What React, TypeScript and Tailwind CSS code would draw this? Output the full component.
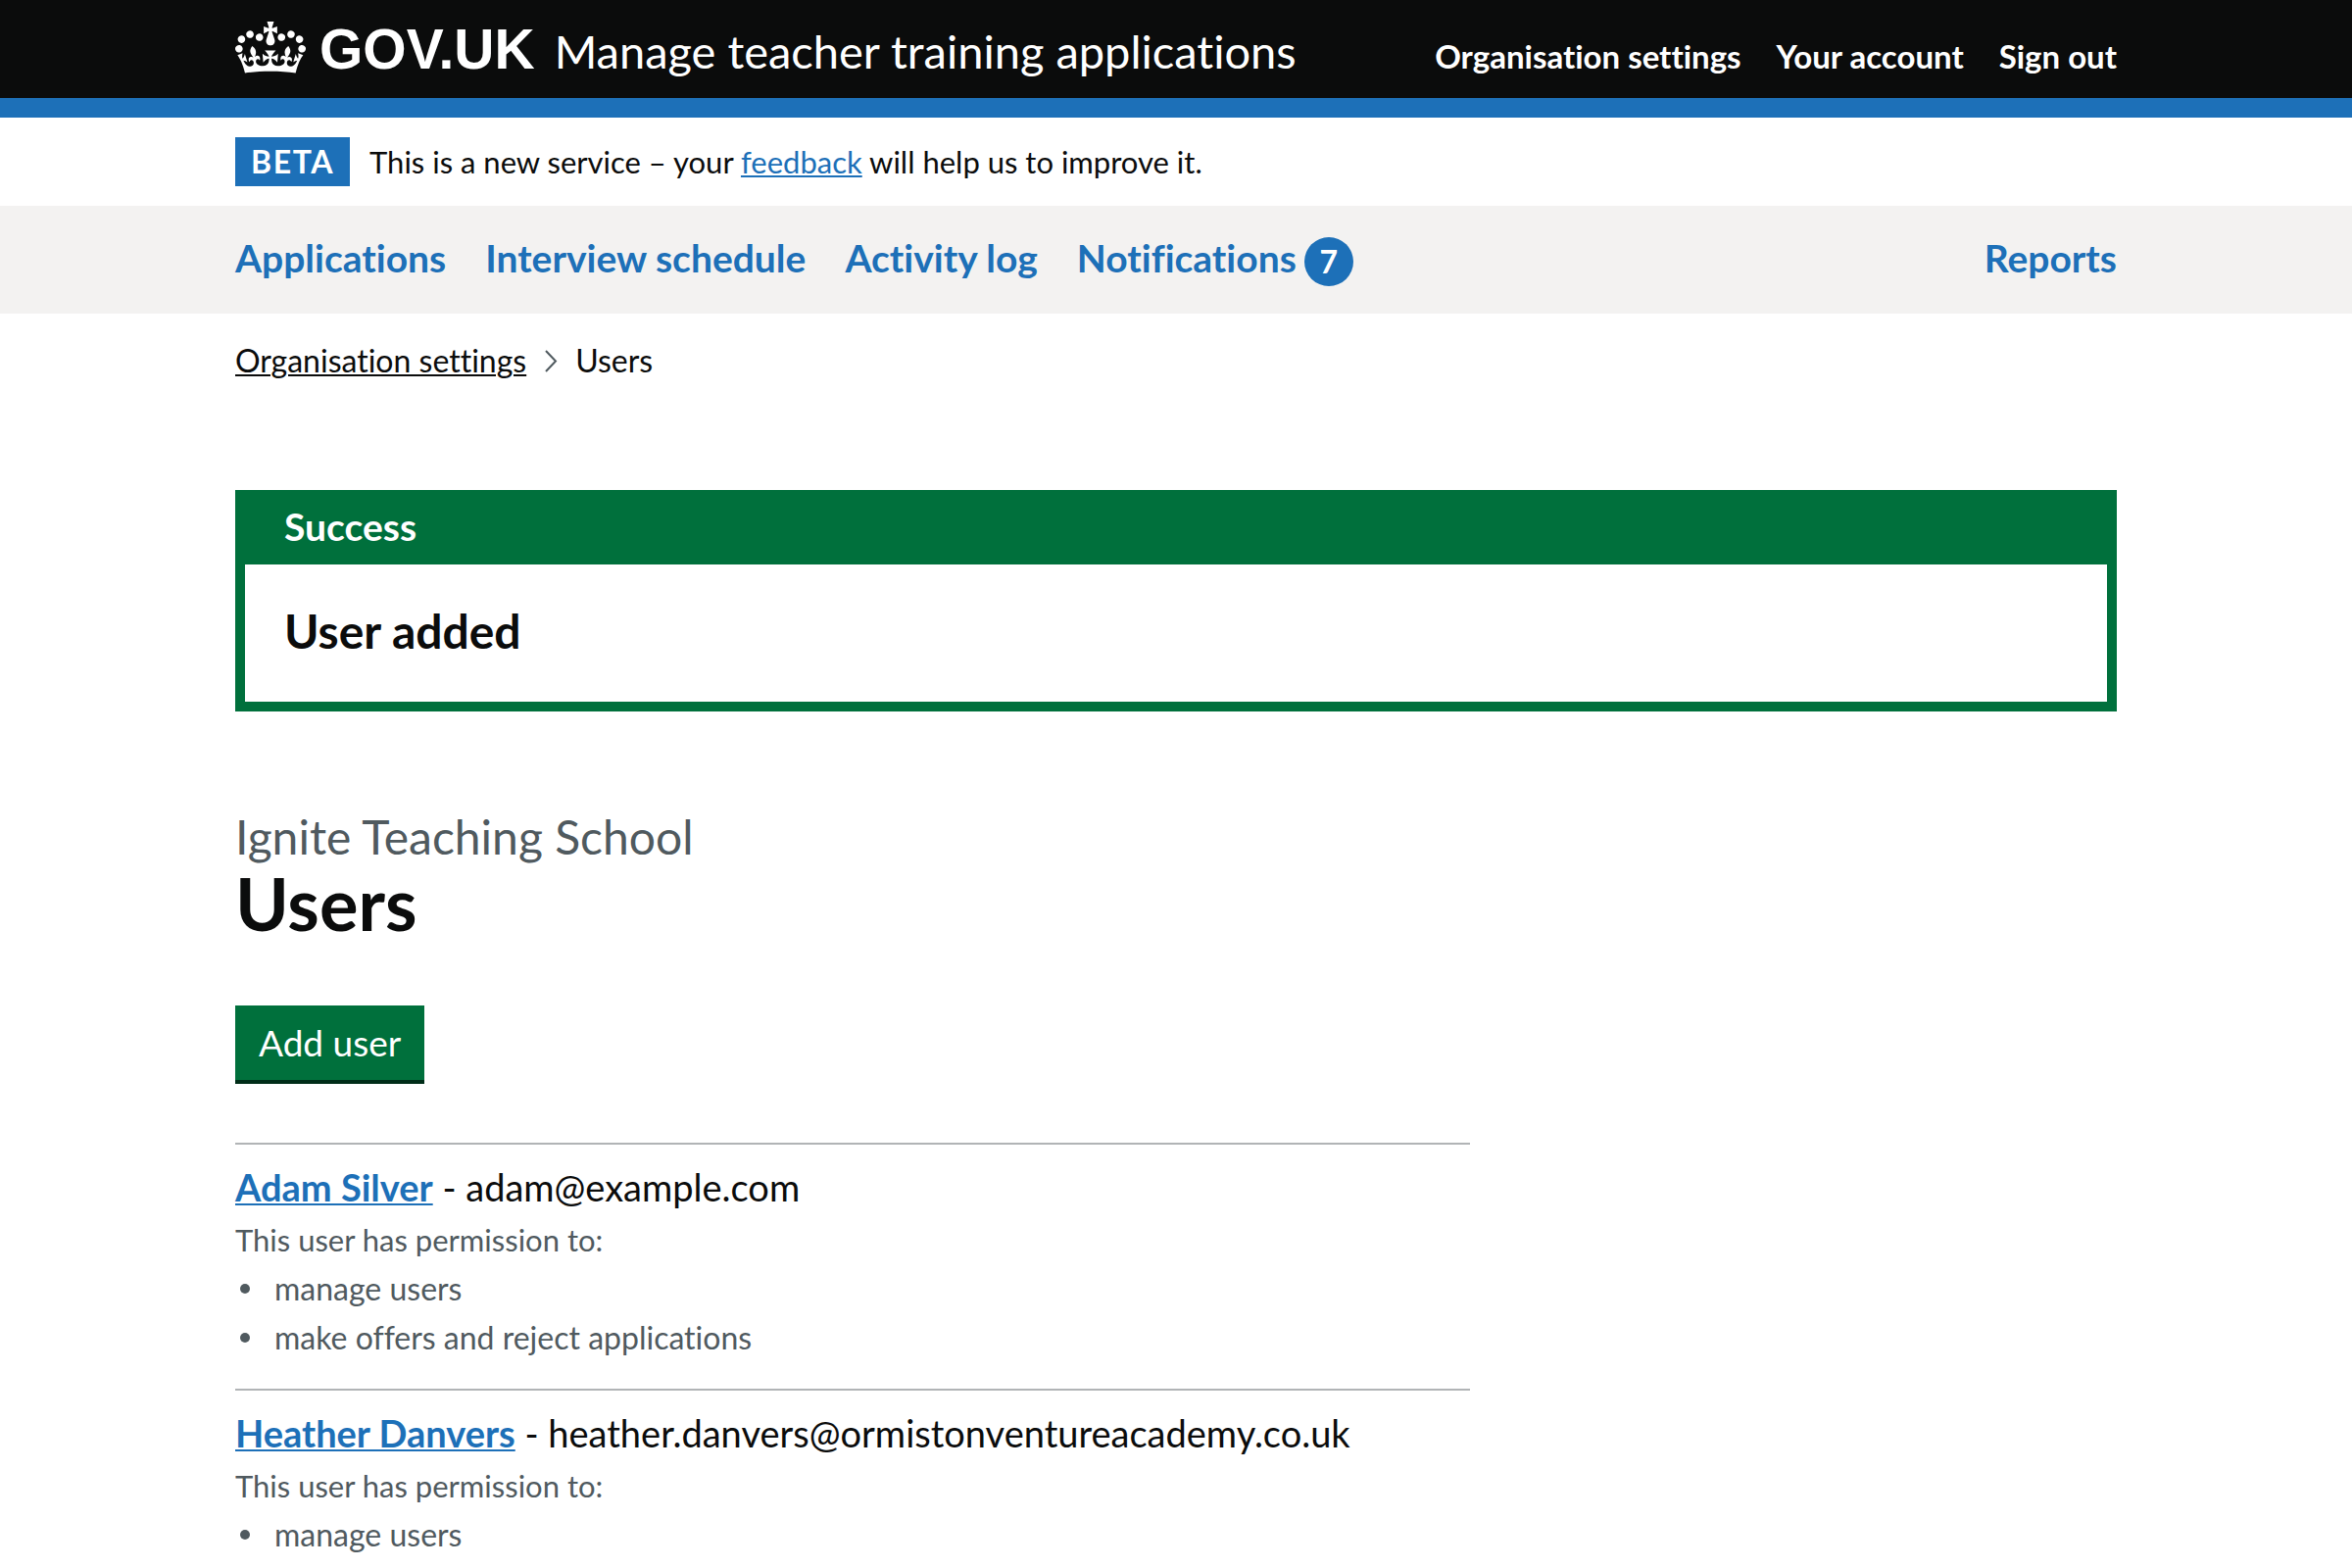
import type { ReactNode } from 'react';

type User = { name: string; email: string; permissions: string[] };

const users: User[] = [
  {
    name: 'Adam Silver',
    email: 'adam@example.com',
    permissions: ['manage users', 'make offers and reject applications'],
  },
  {
    name: 'Heather Danvers',
    email: 'heather.danvers@ormistonventureacademy.co.uk',
    permissions: ['manage users'],
  },
];

const accountLinks = ['Organisation settings', 'Your account', 'Sign out'];

const primaryLinks = [
  { label: 'Applications' },
  { label: 'Interview schedule' },
  { label: 'Activity log' },
  { label: 'Notifications', count: 7 },
];

function Container({ children, className = '' }: { children: ReactNode; className?: string }) {
  return <div className={`mx-auto w-full max-w-[2040px] px-[60px] ${className}`}>{children}</div>;
}

function Crown() {
  return (
    <svg className="mb-1 h-[53px] w-[72px] shrink-0" viewBox="0 0 132 97" fill="currentColor" aria-hidden="true">
      <path
        fillRule="evenodd"
        d="M25 30.2c3.5 1.5 7.7-.2 9.1-3.7 1.5-3.6-.2-7.8-3.9-9.2-3.6-1.4-7.6.3-9.1 3.9-1.4 3.5.3 7.5 3.9 9zM9 39.5c3.6 1.5 7.8-.2 9.2-3.7 1.5-3.6-.2-7.8-3.9-9.1-3.6-1.5-7.6.2-9.1 3.8-1.4 3.5.3 7.5 3.8 9zM4.4 57.2c3.5 1.5 7.7-.2 9.1-3.8 1.5-3.6-.2-7.7-3.9-9.1-3.5-1.5-7.6.3-9.1 3.8-1.4 3.5.3 7.6 3.9 9.1zm38.3-21.4c3.5 1.5 7.7-.2 9.1-3.8 1.5-3.6-.2-7.7-3.9-9.1-3.6-1.5-7.6.3-9.1 3.8-1.3 3.6.4 7.7 3.9 9.1zm64.4-5.6c-3.6 1.5-7.8-.2-9.1-3.7-1.5-3.6.2-7.8 3.8-9.2 3.6-1.4 7.7.3 9.2 3.9 1.3 3.5-.4 7.5-3.9 9zm15.9 9.3c-3.6 1.5-7.7-.2-9.1-3.7-1.5-3.6.2-7.8 3.7-9.1 3.6-1.5 7.7.2 9.2 3.8 1.5 3.5-.3 7.5-3.8 9zm4.7 17.7c-3.6 1.5-7.8-.2-9.2-3.8-1.5-3.6.2-7.7 3.9-9.1 3.6-1.5 7.7.3 9.2 3.8 1.3 3.5-.4 7.6-3.9 9.1zM89.3 35.8c-3.6 1.5-7.8-.2-9.2-3.8-1.4-3.6.2-7.7 3.9-9.1 3.6-1.5 7.7.3 9.2 3.8 1.4 3.6-.3 7.7-3.9 9.1zM69.7 17.7l8.9 4.7V9.3l-8.9 2.8c-.2-.3-.5-.6-.9-.9L72.4 0H59.6l3.5 11.2c-.3.3-.6.5-.9.9l-8.8-2.8v13.1l8.8-4.7c.3.3.6.7.9.9l-5 15.4v.1c-.2.8-.4 1.6-.4 2.4 0 4.1 3.1 7.5 7 8.1h.2c.3 0 .7.1 1 .1.4 0 .7 0 1-.1h.2c4-.6 7.1-4.1 7.1-8.1 0-.8-.1-1.7-.4-2.4V34l-5.1-15.4c.4-.2.7-.6 1-.9zM66 92.8c16.9 0 32.8 1.1 47.1 3.2 4-16.9 8.9-26.7 14-33.5l-9.6-3.4c1 4.9 1.1 7.2 0 10.2-1.5-1.4-3-4.3-4.2-8.7L108.6 76c2.8-2 5-3.2 7.5-3.3-4.4 9.4-10 11.9-13.6 11.2-4.3-.8-6.3-4.6-5.6-7.9 1-4.7 5.7-5.9 8-.5 4.3-8.7-3-11.4-7.6-8.8 7.1-7.2 7.9-13.5 2.1-21.1-8 6.1-8.1 12.3-4.5 20.8-4.7-5.4-12.1-2.5-9.5 6.2 3.4-5.2 7.9-2 7.2 3.1-.6 4.3-6.4 7.8-13.5 7.2-10.3-.9-10.9-8-11.2-13.8 2.5-.5 7.1 1.8 11 7.3L80.2 60c-4.1 4.4-8 5.3-12.3 5.4 1.4-4.4 8-11.6 8-11.6H55.5s6.4 7.2 7.9 11.6c-4.2-.1-8-1-12.3-5.4l1.4 16.4c3.9-5.5 8.5-7.7 10.9-7.3-.3 5.8-.9 12.8-11.1 13.8-7.2.6-12.9-2.9-13.5-7.2-.7-5 3.8-8.3 7.1-3.1 2.7-8.7-4.6-11.6-9.4-6.2 3.7-8.5 3.6-14.7-4.6-20.8-5.8 7.6-5 13.9 2.2 21.1-4.7-2.6-11.9.1-7.7 8.8 2.3-5.5 7.1-4.2 8.1.5.7 3.3-1.3 7.1-5.7 7.9-3.5.7-9-1.8-13.5-11.2 2.5.1 4.7 1.3 7.5 3.3l-4.7-15.4c-1.2 4.4-2.7 7.2-4.3 8.7-1.1-3-.9-5.3 0-10.2l-9.5 3.4c5 6.9 9.9 16.7 14 33.5 14.8-2.1 30.8-3.2 47.7-3.2z"
      />
    </svg>
  );
}

function Header() {
  return (
    <header className="border-b-20 border-[#1d70b8] bg-[#0b0c0c] text-white">
      <Container className="flex h-[100px] items-baseline justify-between pt-5">
        <div className="flex items-baseline gap-5">
          <a href="#" className="flex items-center gap-[14px] font-['Liberation_Sans',sans-serif] text-[57px] leading-[60px] font-bold">
            <Crown />
            <span className="self-baseline">GOV.UK</span>
          </a>
          <a href="#" className="text-[47px] leading-[60px]">Manage teacher training applications</a>
        </div>
        <nav aria-label="Account">
          <ul className="flex gap-9 text-[33px] leading-[50px] font-bold">
            {accountLinks.map((label) => (
              <li key={label}><a href="#">{label}</a></li>
            ))}
          </ul>
        </nav>
      </Container>
    </header>
  );
}

function PhaseBanner() {
  return (
    <Container className="flex items-center gap-5 py-5">
      <strong className="bg-[#1d70b8] px-4 text-[32px] leading-[50px] font-bold tracking-wider text-white">BETA</strong>
      <p className="text-[31px] leading-[50px]">
        This is a new service – your{' '}
        <a href="#" className="text-[#1d70b8] underline decoration-2 underline-offset-2">feedback</a>{' '}
        will help us to improve it.
      </p>
    </Container>
  );
}

function PrimaryNav() {
  return (
    <nav aria-label="Primary" className="bg-[#f3f2f1]">
      <Container className="flex items-start justify-between py-7 text-[39px] leading-[50px] font-bold text-[#1d70b8]">
        <ul className="flex items-start gap-10">
          {primaryLinks.map(({ label, count }) => (
            <li key={label}>
              <a href="#" className="flex items-start gap-2">
                {label}
                {count !== undefined && (
                  <span className="mt-1 size-[50px] rounded-full bg-[#1d70b8] text-center text-[32px] text-white">{count}</span>
                )}
              </a>
            </li>
          ))}
        </ul>
        <a href="#">Reports</a>
      </Container>
    </nav>
  );
}

function Breadcrumbs() {
  return (
    <nav aria-label="Breadcrumb">
      <ol className="flex items-center gap-[18px] pt-6 text-[32px] leading-[48px]">
        <li><a href="#" className="underline decoration-2 underline-offset-2">Organisation settings</a></li>
        <li className="flex items-center gap-[18px]" aria-current="page">
          <svg className="h-6 w-[14px]" viewBox="0 0 14 24" fill="none" stroke="#505a5f" strokeWidth="2" aria-hidden="true">
            <path d="M2 2l10 10.500L2 23" />
          </svg>
          Users
        </li>
      </ol>
    </nav>
  );
}

function SuccessBanner() {
  return (
    <section role="alert" aria-labelledby="banner-title" className="mt-[108px] border-10 border-[#00703c] bg-white">
      <h2 id="banner-title" className="bg-[#00703c] px-10 pt-1 pb-4 text-[39px] leading-[46px] font-bold text-white">Success</h2>
      <p className="px-10 pt-[38px] pb-[42px] text-[48px] leading-[60px] font-bold">User added</p>
    </section>
  );
}

function UserItem({ name, email, permissions }: User) {
  return (
    <li className="border-t-2 border-[#b1b4b6] pt-[18px] pb-[27px] last:pb-0">
      <h2 className="text-[38px] leading-[50px]">
        <a href="#" className="font-bold text-[#1d70b8] underline decoration-2 underline-offset-2">{name}</a> - {email}
      </h2>
      <div className="mt-1 text-[31px] leading-[50px] text-[#505a5f]">
        <p>This user has permission to:</p>
        <ul className="pl-[5px] text-[32px]">
          {permissions.map((permission) => (
            <li
              key={permission}
              className="flex items-center gap-[25px] before:size-[10px] before:rounded-full before:bg-[#505a5f]"
            >
              {permission}
            </li>
          ))}
        </ul>
      </div>
    </li>
  );
}

export default function App() {
  return (
    <div className="bg-white font-['Lato',sans-serif] text-[#0b0c0c] [font-variant-ligatures:none]">
      <Header />
      <PhaseBanner />
      <PrimaryNav />
      <Container>
        <Breadcrumbs />
        <main>
          <SuccessBanner />
          <h1 className="mt-[102px] text-[74px] leading-[84px] font-bold">
            <span className="block text-[48px] leading-[52px] font-normal text-[#505a5f]">Ignite Teaching School</span>
            Users
          </h1>
          <button type="button" className="mt-[62px] block bg-[#00703c] px-6 text-[37px] leading-[76px] text-white shadow-[0_4px_0_#002d18]">
            Add user
          </button>
          <ul className="mt-16 max-w-[1260px]">
            {users.map((user) => (
              <UserItem key={user.email} {...user} />
            ))}
          </ul>
        </main>
      </Container>
    </div>
  );
}
